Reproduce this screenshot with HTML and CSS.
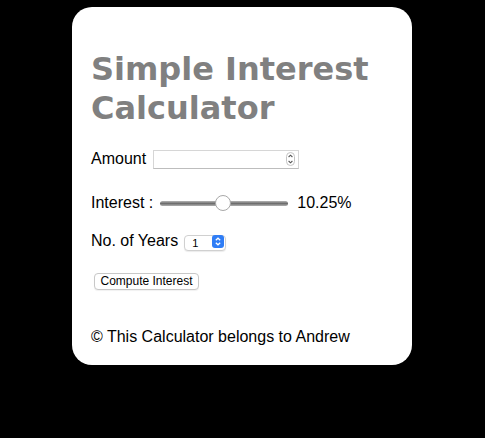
FILE: index.html
```html
<!DOCTYPE html>
<html>
<head>
<meta charset="utf-8">
<link rel="stylesheet" href="styles.css">
</head>
<body>
<div class="card">
  <h1 class="title">Simple Interest Calculator</h1>
  <div class="row row-amount">
    <label class="lbl lbl-amount">Amount</label>
    <span class="num-wrap">
      <input type="number" class="num">
      <svg class="spin" width="9" height="14" viewBox="0 0 9 14"><rect x="0.5" y="0.5" width="8" height="13" rx="4" fill="#fff" stroke="#c4c4c4"/><path d="M2.6 5 L4.5 3.2 L6.4 5" fill="none" stroke="#555" stroke-width="1.1"/><path d="M2.6 9 L4.5 10.8 L6.4 9" fill="none" stroke="#555" stroke-width="1.1"/></svg>
    </span>
  </div>
  <div class="row row-rate">
    <label class="lbl lbl-rate">Interest :</label>
    <input type="range" class="range" min="1" max="20" step="0.25" value="10.25">
    <span class="rate-val">10.25%</span>
  </div>
  <div class="row row-years">
    <label class="lbl lbl-years">No. of Years</label>
    <span class="sel-wrap">
      <select class="sel"><option>1</option></select>
      <svg class="sel-arrow" width="12" height="13" viewBox="0 0 12 13"><rect x="0" y="0" width="12" height="13" rx="3" fill="#2f7df6"/><path d="M3.8 5.2 L6 3.2 L8.2 5.2" fill="none" stroke="#fff" stroke-width="1.3"/><path d="M3.8 7.8 L6 9.8 L8.2 7.8" fill="none" stroke="#fff" stroke-width="1.3"/></svg>
    </span>
  </div>
  <button class="btn">Compute Interest</button>
  <p class="foot">© This Calculator belongs to Andrew</p>
</div>
</body>
</html>
```

FILE: styles.css
```css
html, body {
  margin: 0;
  padding: 0;
  background: #000;
}
body {
  font-family: "Liberation Sans", Arial, sans-serif;
  font-size: 16px;
  color: #000;
  padding: 7px 0 0 72px;
}
.card {
  width: 340px;
  box-sizing: border-box;
  margin: 0;
  background: #fff;
  border-radius: 20px;
  padding: 43px 19px 19px 19px;
}
.title {
  margin: 0;
  font-family: "DejaVu Sans", Verdana, sans-serif;
  font-weight: bold;
  font-size: 32px;
  line-height: 39px;
  color: #808080;
}
.row {
  display: flex;
  align-items: center;
  height: 20px;
}
.row-amount { margin-top: 21px; }
.row-rate { margin-top: 24px; }
.row-years { margin-top: 18px; }
.lbl { line-height: 18px; }
.lbl-amount { margin-right: 7px; }
.lbl-rate { margin-right: 7px; }
.lbl-years { margin-right: 6px; }
.num-wrap {
  position: relative;
  display: inline-block;
  width: 146px;
  height: 19px;
}
.num {
  box-sizing: border-box;
  width: 146px;
  height: 19px;
  margin: 0;
  border: 1px solid #d6d6d6;
  border-bottom-color: #bdbdbd;
  border-radius: 0;
  padding: 0 3px;
  background: #fff;
  outline: none;
  -moz-appearance: textfield;
}
.num::-webkit-inner-spin-button,
.num::-webkit-outer-spin-button {
  -webkit-appearance: none;
  margin: 0;
}
.spin {
  position: absolute;
  left: 133px;
  top: 2px;
}
.range {
  -webkit-appearance: none;
  appearance: none;
  width: 128px;
  height: 16px;
  margin: 0 9px 0 0;
  padding: 0;
  background: transparent;
}
.range::-webkit-slider-runnable-track {
  height: 5px;
  border-radius: 3px;
  background: linear-gradient(#b5b5b5, #6e6e6e 50%, #b0b0b0);
}
.range::-webkit-slider-thumb {
  -webkit-appearance: none;
  width: 16px;
  height: 16px;
  margin-top: -5.5px;
  border-radius: 50%;
  background: #fff;
  border: 1px solid #a8a8a8;
  box-sizing: border-box;
}
.rate-val { line-height: 18px; }
.sel-wrap {
  position: relative;
  display: inline-block;
  width: 42px;
  height: 16px;
}
.sel {
  -webkit-appearance: none;
  appearance: none;
  box-sizing: border-box;
  width: 42px;
  height: 16px;
  margin: 0;
  padding: 0 0 0 7px;
  border: 1px solid #d0d0d0;
  border-radius: 4px;
  background: #fff;
  font-family: "Liberation Sans", Arial, sans-serif;
  font-size: 11px;
  color: #000;
  box-shadow: 0 1px 1px rgba(0,0,0,0.08);
}
.sel-arrow {
  position: absolute;
  left: 28px;
  top: 1.5px;
}
.btn {
  display: block;
  box-sizing: border-box;
  margin: 22px 0 0 3px;
  width: 105px;
  height: 17px;
  padding: 0;
  border: 1px solid #c8c8c8;
  border-radius: 4px;
  background: #fff;
  font-family: "Liberation Sans", Arial, sans-serif;
  font-size: 12px;
  line-height: 15px;
  color: #000;
  box-shadow: 0 1px 1px rgba(0,0,0,0.06);
}
.foot {
  margin: 38px 0 0 0;
  line-height: 18px;
}
```
